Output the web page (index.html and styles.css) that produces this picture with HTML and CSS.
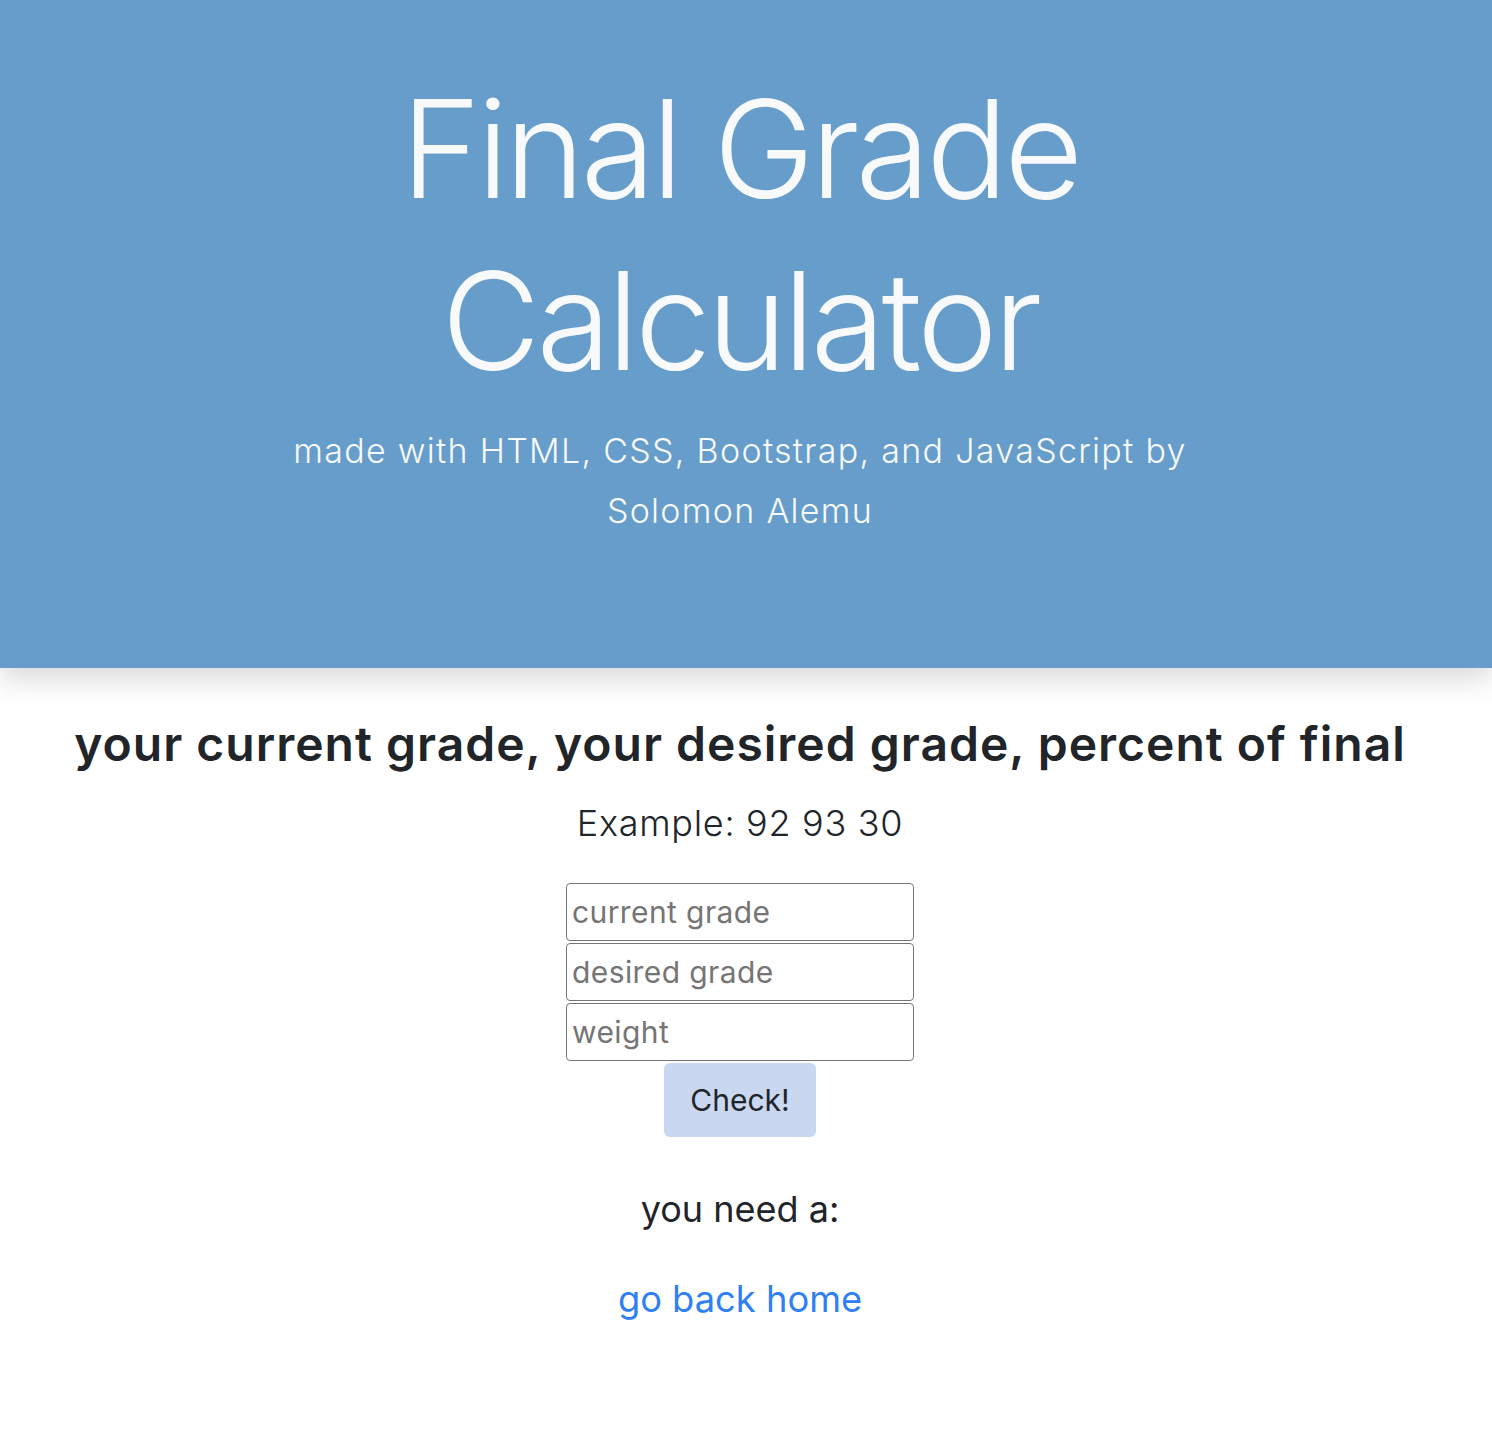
FILE: index.html
```html
<!DOCTYPE html>
<html lang="en">
<head>
<meta charset="utf-8">
<title>Final Grade Calculator</title>
<link rel="stylesheet" href="styles.css">
</head>
<body>
<header class="hero">
  <h1 class="hero-title">Final Grade Calculator</h1>
  <p class="hero-sub">made with HTML, CSS, Bootstrap, and JavaScript by Solomon Alemu</p>
</header>
<main class="content">
  <h2 class="prompt">your current grade, your desired grade, percent of final</h2>
  <p class="example">Example: 92 93 30</p>
  <form class="calc">
    <input class="field" type="text" placeholder="current grade">
    <input class="field" type="text" placeholder="desired grade">
    <input class="field" type="text" placeholder="weight">
    <button class="check" type="button">Check!</button>
  </form>
  <p class="result">you need a:</p>
  <a class="home" href="#">go back home</a>
</main>
</body>
</html>
```
FILE: styles.css
```css
html, body {
  margin: 0;
  padding: 0;
  background: #ffffff;
}
body {
  font-family: Inter, "Noto Sans", sans-serif;
  color: #212529;
}
.hero {
  background: #669dca;
  color: #f8f9fa;
  height: 668px;
  box-sizing: border-box;
  padding: 63px 12px 0 0;
  text-align: center;
  box-shadow: 0 10px 28px rgba(0, 0, 0, 0.16);
  position: relative;
  z-index: 1;
}
.hero-title {
  margin: 0 auto;
  width: 760px;
  font-size: 136px;
  font-weight: 300;
  line-height: 172px;
  letter-spacing: -4px;
}
.hero-sub {
  margin: 14px auto 0;
  width: 960px;
  font-size: 34px;
  font-weight: 300;
  line-height: 60px;
  letter-spacing: 1.3px;
}
.content {
  text-align: center;
  padding: 47px 12px 0 0;
  display: flex;
  flex-direction: column;
  align-items: center;
}
.prompt {
  margin: 0;
  font-size: 48px;
  font-weight: 600;
  line-height: 58px;
  letter-spacing: 1px;
}
.example {
  margin: 26px 0 0;
  font-size: 36px;
  font-weight: 300;
  line-height: 48px;
  letter-spacing: 0.7px;
}
.calc {
  margin-top: 36px;
  display: flex;
  flex-direction: column;
  align-items: center;
  gap: 2px;
}
.field {
  width: 348px;
  height: 58px;
  box-sizing: border-box;
  border: 1.5px solid #767676;
  border-radius: 4px;
  padding: 0 5px;
  font-family: Inter, "Noto Sans", sans-serif;
  font-size: 30px;
  letter-spacing: 0.4px;
  color: #212529;
  margin: 0;
}
.field::placeholder {
  color: #757575;
}
.check {
  width: 152px;
  height: 74px;
  border: none;
  border-radius: 6px;
  background: #c9d7f0;
  color: #212529;
  font-family: Inter, "Noto Sans", sans-serif;
  font-size: 30px;
}
.result {
  margin: 48px 0 0;
  font-size: 36px;
  font-weight: 400;
  line-height: 48px;
}
.home {
  margin-top: 42px;
  font-size: 36.3px;
  line-height: 48px;
  color: #2f80f5;
  text-decoration: none;
}
```
